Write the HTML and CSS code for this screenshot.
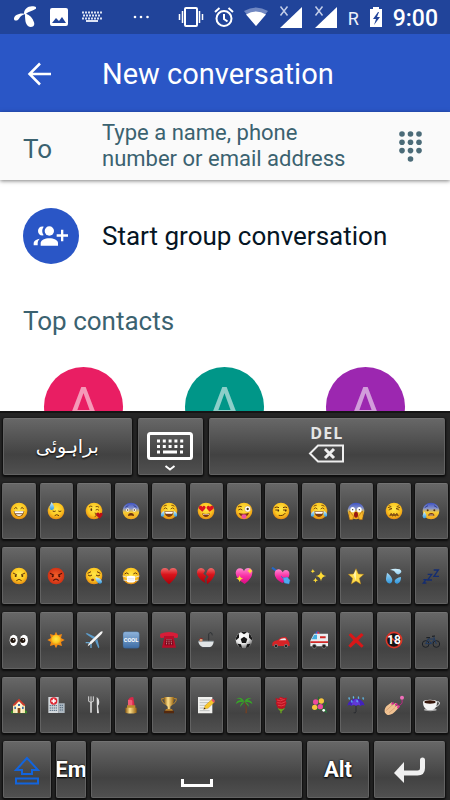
FILE: index.html
```html
<!DOCTYPE html>
<html lang="en">
<head>
    <meta charset="UTF-8">
    <meta name="viewport" content="width=device-width, initial-scale=1.0">
    <title>New conversation</title>
    <link rel="stylesheet" href="styles.css">
</head>
<body>
    <!-- shared gradients and shapes -->
    <svg class="defs" width="0" height="0" aria-hidden="true">
        <defs>
            <radialGradient id="yellow" cx=".5" cy=".4" r=".6"><stop offset="0" stop-color="#ffe84a"/><stop offset=".6" stop-color="#fcc822"/><stop offset="1" stop-color="#e58a12"/></radialGradient>
            <radialGradient id="angry" cx=".5" cy=".5" r=".55"><stop offset="0" stop-color="#f4612a"/><stop offset="1" stop-color="#cc2c12"/></radialGradient>
            <linearGradient id="cold" x1="0" y1="0" x2="0" y2="1"><stop offset="0" stop-color="#3b50c4"/><stop offset=".35" stop-color="#8793c8"/><stop offset=".58" stop-color="#f6cb35"/><stop offset="1" stop-color="#f0a51b"/></linearGradient>
            <linearGradient id="red" x1="0" y1="0" x2="0" y2="1"><stop offset="0" stop-color="#ee6a6a"/><stop offset=".4" stop-color="#d9141b"/><stop offset="1" stop-color="#a80009"/></linearGradient>
            <linearGradient id="pink" x1="0" y1="0" x2="0" y2="1"><stop offset="0" stop-color="#ff8cd0"/><stop offset=".5" stop-color="#f92fa6"/><stop offset="1" stop-color="#d8097f"/></linearGradient>
            <linearGradient id="water" x1="0" y1="0" x2="0" y2="1"><stop offset="0" stop-color="#d2f2ff"/><stop offset="1" stop-color="#2f97dd"/></linearGradient>
            <linearGradient id="gold" x1="0" y1="0" x2="1" y2="0"><stop offset="0" stop-color="#8a5a12"/><stop offset=".4" stop-color="#ffe08a"/><stop offset="1" stop-color="#94600f"/></linearGradient>
            <linearGradient id="cool" x1="0" y1="0" x2="0" y2="1"><stop offset="0" stop-color="#8fb4dc"/><stop offset="1" stop-color="#3d6ca4"/></linearGradient>
            <radialGradient id="ball" cx=".4" cy=".3" r=".7"><stop offset="0" stop-color="#fff"/><stop offset=".6" stop-color="#e8e8e8"/><stop offset="1" stop-color="#777"/></radialGradient>
        </defs>
        <symbol id="face" viewBox="0 0 54 54"><circle cx="27" cy="27" r="25" fill="url(#yellow)"/></symbol>
        <symbol id="joy" viewBox="0 0 54 54">
            <circle cx="27" cy="27" r="25" fill="url(#yellow)"/>
            <path d="M11 21q5-7 11 0M32 21q6-7 11 0M11 13q4-4 9-3M34 10q5-1 9 3" fill="none" stroke="#6b3a08" stroke-width="2.5"/>
            <path d="M13 28h28q-2 17-14 17T13 28z" fill="#7a3b10"/><path d="M15 29h24l-2 6H17z" fill="#fff"/>
            <path d="M13 27C5 29 1 36 3 42q4 5 9 0c2-5 1-10 1-15zM41 27c8 2 12 9 10 15q-4 5-9 0c-2-5-1-10-1-15z" fill="url(#water)"/>
        </symbol>
        <symbol id="signal" viewBox="0 0 25 24">
            <path d="M24 2v21H2z" fill="#fff"/>
            <path d="M2.500 1.500l7 9M9.500 1.500l-7 9" stroke="#c3cee9" stroke-width="1.500" fill="none"/>
        </symbol>
        <symbol id="sparkle" viewBox="0 0 20 20"><path d="M10 0q1 9 10 10-9 1-10 10-1-9-10-10 9-1 10-10z" fill="#ffdc35"/></symbol>
    </svg>

    <div class="app">
        <div class="status-bar">
            <div class="status-left">
                <svg width="23" height="24" viewBox="0 0 69 72"><path d="M33 26C33 14 43 4 57 4c12 0 17 4 9 9-6 5-19 6-27 13 11 4 20 12 24 26 3 10-2 14-10 14-11-1-15-11-16-20-1-7-1-13-1-18-8 1-14 6-18 13C14 47 4 50 3 42 2 33 16 24 33 26z" fill="#fff"/></svg>
                <svg width="18" height="18" viewBox="0 0 18 18"><path fill-rule="evenodd" d="M2 0h14a2 2 0 0 1 2 2v14a2 2 0 0 1-2 2H2a2 2 0 0 1-2-2V2a2 2 0 0 1 2-2zM2 15h14l-4-6-3 4-3-3z" fill="#fff"/></svg>
                <svg width="20" height="12" viewBox="0 0 20 12"><path d="M0 1.500h20M1 4.500h18M0 7.500h20" stroke="#dde4f4" stroke-width="2" stroke-dasharray="2 1"/><path d="M4 10h12" stroke="#dde4f4" stroke-width="2"/></svg>
            </div>
            <svg class="more" width="18" height="4" viewBox="0 0 18 4"><g fill="#fff"><circle cx="3" cy="2" r="1.300"/><circle cx="9" cy="2" r="1.300"/><circle cx="15.500" cy="2" r="1.300"/></g></svg>
            <div class="status-right">
                <svg width="26" height="22" viewBox="0 0 26 22"><rect x="7" y="2" width="12" height="18" rx="1" fill="none" stroke="#fff" stroke-width="2"/><path d="M1.500 8v6M4.500 5v12M21.500 5v12M24.500 8v6" stroke="#fff" stroke-width="1.500"/></svg>
                <svg width="20" height="22" viewBox="0 0 20 22"><circle cx="10" cy="12.500" r="7.500" fill="none" stroke="#fff" stroke-width="2"/><path d="M10 8v5l3.500 2.500M1 6l4.500-4M19 6l-4.500-4" fill="none" stroke="#fff" stroke-width="2"/></svg>
                <svg width="24" height="22" viewBox="0 0 24 22"><path d="M12 20L0 5Q12-2 24 5z" fill="#7188c2"/><path d="M12 20L2 8.500q10-6 20 0z" fill="#fff"/></svg>
                <svg width="25" height="24"><use href="#signal"/></svg>
                <svg width="25" height="24"><use href="#signal"/></svg>
                <span class="roaming">R</span>
                <svg width="14" height="22" viewBox="0 0 14 22"><path d="M4 1h6v2h3v18H1V3h3z" fill="#fff"/><path d="M9 6l-5 7h3l-2 6 6-8H8l2-5z" fill="#21449a"/></svg>
                <span class="clock">9:00</span>
            </div>
        </div>

        <header class="app-bar">
            <button class="back" aria-label="Back">
                <svg width="24" height="24" viewBox="0 0 24 24"><path d="M24 12H3M13 1.500L2.500 12 13 22.500" fill="none" stroke="#fff" stroke-width="2.500"/></svg>
            </button>
            <h1>New conversation</h1>
        </header>

        <div class="recipient">
            <label for="to">To</label>
            <textarea id="to" rows="2" placeholder="Type a name, phone number or email address"></textarea>
            <button class="dialpad" aria-label="Dialpad">
                <svg width="24" height="32" viewBox="0 0 24 32"><g fill="#4b6b78"><circle cx="3" cy="4" r="2.800"/><circle cx="11.500" cy="4" r="2.800"/><circle cx="20" cy="4" r="2.800"/><circle cx="3" cy="12.300" r="2.800"/><circle cx="11.500" cy="12.300" r="2.800"/><circle cx="20" cy="12.300" r="2.800"/><circle cx="3" cy="20.600" r="2.800"/><circle cx="11.500" cy="20.600" r="2.800"/><circle cx="20" cy="20.600" r="2.800"/><circle cx="11.500" cy="29" r="2.800"/></g></svg>
            </button>
        </div>

        <main>
            <button class="start-group">
                <span class="group-icon">
                    <svg width="36" height="22" viewBox="0 0 108 66"><g fill="#fff"><circle cx="49" cy="18" r="14"/><path d="M23 62V54c0-8 13-14 26-14s26 6 26 14v8z"/><path d="M32 5q-9 13 0 26C22 33 15 27 15 18S22 3 32 5zM2 61v-7c0-6 6-11 18-13q-6 6-6 13v7z"/><path d="M84 14h7v14h14v7H91v14h-7V35H71v-7h13z"/></g></svg>
                </span>
                Start group conversation
            </button>
            <h2>Top contacts</h2>
            <div class="contacts">
                <a href="#" class="avatar pink">A</a>
                <a href="#" class="avatar teal">A</a>
                <a href="#" class="avatar purple">A</a>
            </div>
        </main>
    </div>

    <div class="keyboard">
        <div class="row row-top">
            <button class="key language" lang="brh" dir="rtl">براہوئی</button>
            <button class="key" aria-label="Keyboard">
                <svg class="keyboard-icon" width="46" height="40" viewBox="0 0 46 40"><rect x="1.500" y="1.500" width="43" height="25" rx="2" fill="none" stroke="#fff" stroke-width="3"/><path d="M10 9h28M10 14.500h28" stroke="#fff" stroke-width="3" stroke-dasharray="3 2.800"/><path d="M10 20h3M16 20h14M33 20h3" stroke="#fff" stroke-width="3"/><path d="M18.500 34l4.500 3.500 4.500-3.500" fill="none" stroke="#fff" stroke-width="2"/></svg>
            </button>
            <button class="key delete">DEL
                <svg width="37" height="20" viewBox="0 0 37 20"><path d="M10 1.500h25v16H10L2 9.500z" fill="none" stroke="#eee" stroke-width="2"/><path d="M17 5l9 9M26 5l-9 9" stroke="#eee" stroke-width="3"/></svg>
            </button>
        </div>

        <div class="row row-emoji">
            <button class="key" aria-label="Grinning"><svg viewBox="0 0 54 54"><use href="#face"/><path d="M13 20q4-7 9 0M32 20q4-7 9 0" fill="none" stroke="#67380b" stroke-width="3"/><path d="M11 27h32q-2 17-16 17T11 27z" fill="#87521a"/><path d="M13 28h28l-2 6H15zM17 37h20q-4 5-10 5t-10-5z" fill="#fff"/></svg></button>
            <button class="key" aria-label="Cold sweat"><svg viewBox="0 0 54 54"><use href="#face"/><path d="M17 27q5 3 9 0M34 27q5 3 9 0" fill="none" stroke="#67380b" stroke-width="3"/><path d="M23 41q6-6 13 0" fill="none" stroke="#67380b" stroke-width="3"/><path d="M14 0q9 12 7 19-2 6-8 5-7-2-5-10Q10 6 14 0z" fill="url(#water)"/></svg></button>
            <button class="key" aria-label="Blowing a kiss"><svg viewBox="0 0 54 54"><use href="#face"/><ellipse cx="19" cy="23" rx="2.500" ry="4" fill="#5d300a"/><path d="M12 15q5-5 10-1M32 14q6-2 10 2M32 24q5-4 10 1M29 33q8 1 3 5 6 3-3 6" fill="none" stroke="#67380b" stroke-width="2.500"/><path d="M44 50l-9-9q-4-7 2-9 5-1 6 3 5-5 9-1 4 5-8 16z" fill="#bc1118"/></svg></button>
            <button class="key" aria-label="Fearful"><svg viewBox="0 0 54 54"><circle cx="27" cy="27" r="25" fill="url(#cold)"/><path d="M10 16l9-5M35 11l9 5" stroke="#263689" stroke-width="2.500"/><circle cx="17" cy="24" r="5" fill="#fff"/><circle cx="37" cy="24" r="5" fill="#fff"/><circle cx="17" cy="24" r="2.500" fill="#51300c"/><circle cx="37" cy="24" r="2.500" fill="#51300c"/><path d="M18 42q0-9 9-9t9 9q-9-3-18 0z" fill="#70330f"/></svg></button>
            <button class="key" aria-label="Tears of joy"><svg><use href="#joy"/></svg></button>
            <button class="key" aria-label="Heart eyes"><svg viewBox="0 0 54 54"><use href="#face"/><path d="M16 29L6 20q-3-8 4-9 5 0 6 4 3-5 7-3 6 4 0 10zM38 29l-7-7q-5-6 1-10 4-2 7 3 1-4 6-4 7 1 4 9z" fill="#dc1420"/><path d="M15 34q12 4 24 0-3 11-12 11T15 34z" fill="#7c3512"/><path d="M17 35q10 3 20 0l-2 3H19z" fill="#fff"/></svg></button>
            <button class="key" aria-label="Winking with tongue"><svg viewBox="0 0 54 54"><use href="#face"/><path d="M10 24q6-6 12 0M9 15q5-4 11-1" fill="none" stroke="#67380b" stroke-width="3"/><circle cx="38" cy="21" r="9" fill="#fff" stroke="#b77510"/><circle cx="38" cy="21" r="3.500" fill="#3d2b18"/><path d="M11 33q16 5 31-1-3 12-15 12T11 33z" fill="#79310f"/><path d="M20 38q7-3 14 0v8q-7 10-14 0z" fill="#ef509e"/></svg></button>
            <button class="key" aria-label="Smirking"><svg viewBox="0 0 54 54"><use href="#face"/><path d="M8 17q7-4 13 0M33 17q7-4 12 0M10 24h11M33 24h11M20 40q14 3 20-7" fill="none" stroke="#67380b" stroke-width="3"/><circle cx="19" cy="26" r="2.500" fill="#51300c"/><circle cx="41" cy="26" r="2.500" fill="#51300c"/></svg></button>
            <button class="key" aria-label="Laughing"><svg><use href="#joy"/></svg></button>
            <button class="key" aria-label="Screaming"><svg viewBox="0 0 54 54"><circle cx="27" cy="27" r="25" fill="url(#cold)"/><ellipse cx="17" cy="23" rx="7" ry="8" fill="#fff"/><ellipse cx="37" cy="23" rx="7" ry="8" fill="#fff"/><circle cx="17" cy="23" r="2" fill="#333"/><circle cx="37" cy="23" r="2" fill="#333"/><ellipse cx="27" cy="38" rx="6" ry="9" fill="#991810"/><path d="M6 29q4-3 6 4l8 10-3 10H8Q4 44 6 29zM48 29q-4-3-6 4l-8 10 3 10h9q4-9 2-24z" fill="#f9b928" stroke="#9b550d" stroke-width="1.500"/></svg></button>
            <button class="key" aria-label="Confounded"><svg viewBox="0 0 54 54"><use href="#face"/><path d="M9 16l12 4-10 4M45 16l-12 4 10 4M11 11l8 3M43 11l-8 3" fill="none" stroke="#67380b" stroke-width="2.500"/><path d="M14 41l4-7 5 4 4-4 4 4 5-4 4 7-5-2-4 4-4-4-4 4-4-4z" fill="#8b5520" stroke="#67380b" stroke-width="2"/></svg></button>
            <button class="key" aria-label="Anxious"><svg viewBox="0 0 54 54"><circle cx="27" cy="27" r="25" fill="url(#cold)"/><path d="M8 17l10-6M36 11l10 6" stroke="#263689" stroke-width="2.500"/><circle cx="17" cy="25" r="3" fill="#51300c"/><circle cx="37" cy="25" r="3" fill="#51300c"/><path d="M19 41q0-8 9-8t9 8z" fill="#70330f"/><path d="M22 39h12" stroke="#fff" stroke-width="2"/><path d="M7 29q8 10 6 16-3 6-9 3-5-4-1-11z" fill="url(#water)"/></svg></button>

            <button class="key" aria-label="Angry"><svg viewBox="0 0 54 54"><use href="#face"/><path d="M9 18l12 6M45 18l-12 6M19 41q8-8 16 0" fill="none" stroke="#67380b" stroke-width="3"/><circle cx="17" cy="27" r="3" fill="#51300c"/><circle cx="37" cy="27" r="3" fill="#51300c"/></svg></button>
            <button class="key" aria-label="Pouting"><svg viewBox="0 0 54 54"><circle cx="27" cy="27" r="25" fill="url(#angry)"/><path d="M9 19l12 6M45 19l-12 6M19 41q8-9 16 0" fill="none" stroke="#4d1006" stroke-width="3.500"/><circle cx="17" cy="28" r="3" fill="#3d1006"/><circle cx="37" cy="28" r="3" fill="#3d1006"/></svg></button>
            <button class="key" aria-label="Sleepy"><svg viewBox="0 0 54 54"><use href="#face"/><path d="M8 19l10-5M36 14l10 5M9 24q6 6 12 0M33 24q6 6 12 0" fill="none" stroke="#67380b" stroke-width="3"/><ellipse cx="23" cy="39" rx="5" ry="3.500" fill="#884114"/><path d="M31 31q16 2 20 12 1 8-7 7-12-4-13-19z" fill="url(#water)"/></svg></button>
            <button class="key" aria-label="Medical mask"><svg viewBox="0 0 54 54"><use href="#face"/><path d="M8 21q6-7 12 0M34 21q6-7 12 0" fill="none" stroke="#67380b" stroke-width="3"/><path d="M2 27l14 4h22l14-4M4 39l12 2M50 39l-12 2" fill="none" stroke="#e8e8e8" stroke-width="2.500"/><path d="M15 28q12-4 24 0v16q-12 5-24 0z" fill="#fff"/><path d="M17 34h20M17 39h20" stroke="#c9c9c9" stroke-width="1.500"/></svg></button>
            <button class="key" aria-label="Heart"><svg viewBox="0 0 54 54"><path d="M27 52Q3 32 2 16 3 3 15 3q9 0 12 9Q30 3 39 3q12 0 13 13-1 16-25 36z" fill="url(#red)"/></svg></button>
            <button class="key" aria-label="Broken heart"><svg viewBox="0 0 54 54"><path d="M25 48Q1 34 0 17 0 4 12 3q9 0 12 8l-5 9 9 8-6 9z" fill="url(#red)"/><path d="M30 52l-1-14 6-9-8-8 5-12q6-8 14-5 11 5 7 19-5 14-23 29z" fill="url(#red)"/></svg></button>
            <button class="key" aria-label="Sparkling heart"><svg viewBox="0 0 54 54"><path d="M29 51Q3 35 2 18 3 4 15 4q9 0 12 9Q30 3 40 3q12 1 12 14-1 17-23 34z" fill="url(#pink)"/><use href="#sparkle" x="35" y="2" width="20" height="20"/><use href="#sparkle" x="3" y="24" width="22" height="22"/></svg></button>
            <button class="key" aria-label="Heart with arrow"><svg viewBox="0 0 54 54"><path d="M0 2l12 9" stroke="#2468c8" stroke-width="6"/><path d="M31 48Q8 36 8 21 8 8 19 7q9 0 13 9 5-10 14-6 9 5 5 18-4 11-20 20z" fill="url(#pink)"/><path d="M27 28l20 17" stroke="#2878d0" stroke-width="3"/><path d="M33 33l13-3 8 10-3 11-14-3z" fill="#4eaaf2" stroke="#2b7ac7"/></svg></button>
            <button class="key" aria-label="Sparkles"><svg viewBox="0 0 54 54"><use href="#sparkle" x="17" y="9" width="32" height="36"/><use href="#sparkle" x="2" y="5" width="13" height="15"/><use href="#sparkle" x="9" y="32" width="15" height="16"/></svg></button>
            <button class="key" aria-label="Star"><svg viewBox="0 0 54 54"><path d="M27 5l7 16 16 1-13 12 4 17-14-9-14 9 4-17L4 22l16-1z" fill="#ffdc4b" stroke="#b9831b" stroke-width="1.500"/><path d="M27 8v33l-8-18z" fill="#fff4a6"/></svg></button>
            <button class="key" aria-label="Sweat drops"><svg viewBox="0 0 54 54"><g fill="url(#water)"><path d="M15 9Q28 2 44 7q9 6 2 12-7 7-14-1Q28 9 15 9zM6 17q13 9 16 21-1 13-11 11-9-4-8-15zM48 30q1 16-11 20-9-1-8-9 3-8 19-11z"/></g></svg></button>
            <button class="key" aria-label="Sleeping"><svg viewBox="0 0 54 54"><path d="M35 9h14L36 28h15M17 22h12L17 39h13M4 38h8L4 48h9" fill="none" stroke="#142d72" stroke-width="4"/></svg></button>

            <button class="key" aria-label="Eyes"><svg viewBox="0 0 54 54"><g fill="#fff"><ellipse cx="11" cy="28" rx="12" ry="17"/><ellipse cx="42" cy="28" rx="12" ry="17"/></g><circle cx="9" cy="28" r="8" fill="#21160e"/><circle cx="38" cy="28" r="8" fill="#21160e"/><circle cx="11" cy="26" r="2" fill="#fff"/><circle cx="40" cy="26" r="2" fill="#fff"/></svg></button>
            <button class="key" aria-label="Sun"><svg viewBox="0 0 54 54"><path d="M27 2l5 11 13-4-3 12 11 6-11 6 3 12-13-4-5 11-5-11-13 4 3-12L1 27l11-6L9 9l13 4z" fill="#f58a12"/><circle cx="27" cy="27" r="15" fill="url(#yellow)"/></svg></button>
            <button class="key" aria-label="Airplane"><svg viewBox="0 0 54 54"><path d="M2 8l4-2 25 12-6 6zM37 24l6 25-3 3-10-23z" fill="#5c9bc9"/><path d="M52 1q3 3-4 10L20 38 8 46l4-11L40 8Q50-1 52 1z" fill="#f4f4f4"/><path d="M2 35h13M18 39v12" stroke="#69a6cf" stroke-width="4"/></svg></button>
            <button class="key" aria-label="Cool"><svg viewBox="0 0 54 54"><rect x="3" y="2" width="49" height="50" rx="7" fill="url(#cool)" stroke="#315a8a"/><text x="27" y="34" text-anchor="middle" class="cool-text">COOL</text></svg></button>
            <button class="key" aria-label="Telephone"><svg viewBox="0 0 54 54"><path d="M14 14h26l8 36H6z" fill="#b80d29"/><path d="M1 8Q27-2 53 8q3 9-1 13l-10-1v-5H12v5l-10 1Q-2 17 1 8z" fill="#d81c38"/><path d="M17 24h20l3 19H14z" fill="#7d071b"/><path d="M21 25l-2 17M27 25v17M33 25l2 17" stroke="#e1a7ad" stroke-width="3" stroke-dasharray="3 3"/></svg></button>
            <button class="key" aria-label="Bathtub"><svg viewBox="0 0 54 54"><path d="M35 33V9q3-7 9-3l2 7" fill="none" stroke="#292c30" stroke-width="2.500"/><path d="M4 32h46q-2 13-11 16H17Q6 44 4 32z" fill="#e0e4e6"/><path d="M4 31h46" stroke="#a4afb5" stroke-width="3"/><circle cx="12" cy="27" r="5" fill="#dc9e7b"/><path d="M7 26q3-7 10-3" stroke="#8a2020" stroke-width="3" fill="none"/><path d="M15 50h24" stroke="#4a4e53" stroke-width="3"/></svg></button>
            <button class="key" aria-label="Soccer ball"><svg viewBox="0 0 54 54"><circle cx="27" cy="27" r="25" fill="url(#ball)"/><path d="M27 17l10 7-4 12H21l-4-12zM18 4q9-4 18 0l-9 6zM3 20q3-9 9-12v12l-9 8zM51 20q-3-9-9-12v12l9 8zM7 38l11 2 3 11q-10-3-14-13zM47 38l-11 2-3 11q10-3 14-13z" fill="#171717"/></svg></button>
            <button class="key" aria-label="Car"><svg viewBox="0 0 54 54"><path d="M1 45V36q4-7 17-9 8-11 24-9l7 11q5 5 4 16z" fill="#d62326"/><path d="M21 28q8-8 19-6l3 6z" fill="#e7edf1"/><g fill="#222" stroke="#888" stroke-width="2"><circle cx="12" cy="45" r="5"/><circle cx="42" cy="45" r="5"/></g></svg></button>
            <button class="key" aria-label="Ambulance"><svg viewBox="0 0 54 54"><path d="M17 3l6-3 5 4v6H17z" fill="#2e61d9"/><path d="M22 1l6 3v6h-6z" fill="#e22f3c"/><path d="M1 46V29L12 8h42v38z" fill="#e9edf0"/><path d="M5 25l8-14h8v14z" fill="#44aee0"/><path d="M1 31h53v5H1zM30 16h17v6H30z" fill="#d32a28"/><g fill="#222" stroke="#888" stroke-width="2"><circle cx="13" cy="46" r="6"/><circle cx="42" cy="46" r="6"/></g></svg></button>
            <button class="key" aria-label="Cross mark"><svg viewBox="0 0 54 54"><path d="M11 6l16 15L43 6l7 6-16 16 16 16-6 6-17-15-16 15-7-6 15-17L5 12z" fill="#d81718"/></svg></button>
            <button class="key" aria-label="Adults only"><svg viewBox="0 0 54 54"><circle cx="27" cy="27" r="24" fill="#151515"/><path d="M10 13l34 29" stroke="#d93629" stroke-width="5"/><text x="27" y="40" text-anchor="middle" class="adult-text">18</text><circle cx="27" cy="27" r="23" fill="none" stroke="#d93629" stroke-width="5"/></svg></button>
            <button class="key" aria-label="Bicycle"><svg viewBox="0 0 54 54"><g fill="none" stroke="#1c2026" stroke-width="3"><circle cx="11" cy="39" r="10"/><circle cx="43" cy="39" r="10"/></g><path d="M11 39l7-15 10 14H11M18 24h19l-9 14M43 39L35 17" fill="none" stroke="#203a60" stroke-width="3"/><path d="M13 20h11M30 16l9-1" stroke="#15191f" stroke-width="3"/></svg></button>

            <button class="key" aria-label="House"><svg viewBox="0 0 54 54"><path d="M3 46q9-8 24-6 15-2 24 6v6H3z" fill="#3b8a27"/><path d="M9 27h36v24H9z" fill="#f6e8ac"/><path d="M27 8l19 19-3 3-16-9-16 9-3-3z" fill="#d13c2d"/><path d="M27 16l10 10v25H17V26z" fill="#fff4d0"/><path d="M23 36h8v15h-8z" fill="#874819"/><path d="M13 32h5v7h-5zM36 32h5v7h-5zM24 24h6v6h-6z" fill="#3b70ae"/></svg></button>
            <button class="key" aria-label="Hospital"><svg viewBox="0 0 54 54"><path d="M4 3h31v48H4z" fill="#d3d8dc"/><path d="M35 22h18v29H35z" fill="#aeb9c2"/><path d="M8 29h24M8 36h24M8 43h24M38 28h12M38 35h12M38 42h12" stroke="#50677b" stroke-width="3" stroke-dasharray="4 2"/><circle cx="20" cy="15" r="11" fill="#dd2530"/><path d="M20 8v14M13 15h14" stroke="#fff" stroke-width="5"/></svg></button>
            <button class="key" aria-label="Fork and knife"><svg viewBox="0 0 54 54"><path d="M11 1v15q6 6 14 0V1M18 1v18" fill="none" stroke="#d6d6d6" stroke-width="3"/><path d="M18 18v32" stroke="#d6d6d6" stroke-width="5"/><path d="M35 3q10 6 7 22l-3 4 3 21q-3 4-6 0z" fill="#dedede"/></svg></button>
            <button class="key" aria-label="Lipstick"><svg viewBox="0 0 54 54"><path d="M18 12Q24 1 34 4l4 26H18z" fill="#d9284a"/><path d="M18 12q10-3 13 2v16H18z" fill="#f15b76"/><path d="M15 28h25v9H15z" fill="#ba8b2d"/><path d="M10 35h34v15q-17 5-34 0z" fill="url(#gold)"/></svg></button>
            <button class="key" aria-label="Trophy"><svg viewBox="0 0 54 54"><path d="M14 8H5q0 14 14 17M40 8h9q0 14-14 17" fill="none" stroke="#c28b2a" stroke-width="3"/><path d="M12 3h30q0 24-11 29v8h-8v-8Q12 27 12 3z" fill="url(#gold)"/><path d="M18 39h18l3 6H15z" fill="#b7802b"/><path d="M12 44h30v8H12z" fill="#54290e"/></svg></button>
            <button class="key" aria-label="Memo"><svg viewBox="0 0 54 54"><path d="M3 3h43v49H3z" fill="#f1f1ee"/><path d="M8 12h32M8 20h31M8 28h22M8 36h15M8 44h30" stroke="#a4a7a8" stroke-width="2"/><path d="M20 40l5-12 20-18 8 8-20 19z" fill="#f7c72d" stroke="#a76c10"/><path d="M43 12l5-4 6 7-4 5z" fill="#e25363"/><path d="M20 40l2-5 4 3z" fill="#222"/></svg></button>
            <button class="key" aria-label="Palm tree"><svg viewBox="0 0 54 54"><path d="M27 18q7 15 4 34h5q2-19-6-35z" fill="#6d4027"/><path d="M28 17Q20 0 3 7q12 0 17 6Q5 11 3 24q8-8 25-7zM28 17q7-15 22-10-9 1-13 6 13-1 15 11-10-8-24-7zM28 17q-12 3-13 16 6-7 13-16zM28 17q13 4 14 15-6-6-14-15z" fill="#37a627"/></svg></button>
            <button class="key" aria-label="Rose"><svg viewBox="0 0 54 54"><path d="M27 30v22M27 45l-8-8M28 44l9-7" stroke="#6aa520" stroke-width="4"/><path d="M10 6l9 2 7-6 10 4 9-1-4 11 3 4-6 15q-11 7-21 0l-6-15 3-3z" fill="#bf1221"/><path d="M15 12q9 6 23-2M16 20q14 5 25-3M18 28q11 4 21-2M24 5q-3 4 8 4" fill="none" stroke="#f1565b" stroke-width="2"/></svg></button>
            <button class="key" aria-label="Bouquet"><svg viewBox="0 0 54 54"><path d="M14 14l25 23 10-18M26 2l2 32 18 12M14 38l31 5" stroke="#246b2b" stroke-width="4" fill="none"/><g fill="#f7c53d"><circle cx="34" cy="15" r="8"/><circle cx="14" cy="34" r="8"/></g><g fill="#ed4a9e"><circle cx="17" cy="18" r="8"/><circle cx="31" cy="32" r="8"/></g><path d="M36 43l10-7 6 16-7-4z" fill="#28743a"/><circle cx="41" cy="43" r="4" fill="#fff"/></svg></button>
            <button class="key" aria-label="Umbrella"><svg viewBox="0 0 54 54"><path d="M27 12v35q-1 6-7 3" fill="none" stroke="#292b30" stroke-width="3"/><path d="M1 29Q5 9 27 8q22 1 26 21-7-4-12 1-7-6-14 0-7-6-14 0-5-5-12-1z" fill="#4322bd"/><path d="M14 29q2-16 13-21 11 5 13 21-6-6-13 0-7-6-13 0z" fill="#6039d5"/><path d="M6 3q4 7 1 8-4-1-1-8zM19 0q4 7 1 8-4-1-1-8zM34 1q4 7 1 8-4-1-1-8zM48 3q4 7 1 8-4-1-1-8zM14 12q4 7 1 8-4-1-1-8zM30 11q4 7 1 8-4-1-1-8z" fill="#62c6fb" stroke="#62c6fb"/></svg></button>
            <button class="key" aria-label="Nail polish"><svg viewBox="0 0 54 54"><path d="M0 50q-4-8 4-19l16-12 5 4-7 8 13-10 6 4-8 8 11-6 4 5-10 11q-14 17-28 13z" fill="#f1c292"/><path d="M3 44l17-15M12 50l18-15" stroke="#bf8961" stroke-width="1.500"/><path d="M18 23l7-5 2 4-6 5zM29 25l7-4 2 4-6 5zM36 32l7-3 1 4-6 5z" fill="#e12597"/><path d="M37 29q18-2 14-17" fill="none" stroke="#c12886" stroke-width="3"/><circle cx="51" cy="5" r="6" fill="#ef6fba"/></svg></button>
            <button class="key" aria-label="Coffee"><svg viewBox="0 0 54 54"><ellipse cx="25" cy="41" rx="19" ry="5" fill="#aaa"/><path d="M42 18q13-3 10 6-3 7-13 9" fill="none" stroke="#ddd" stroke-width="3"/><path d="M3 18h42q0 20-14 24H17Q3 37 3 18z" fill="#f4f4f4"/><ellipse cx="24" cy="18" rx="21" ry="7" fill="#eee"/><ellipse cx="24" cy="18" rx="17" ry="5" fill="#351509"/></svg></button>
        </div>

        <div class="row row-bottom">
            <button class="key" aria-label="Shift"><svg class="shift-icon" width="28" height="30" viewBox="0 0 28 30"><path d="M14 2L3 14h6v4h10v-4h6zM3 22.500h22v5H3z" fill="none" stroke="#1264dd" stroke-width="2"/></svg></button>
            <button class="key text-key">Em</button>
            <button class="key space" aria-label="Space"><svg width="34" height="10" viewBox="0 0 34 10"><path d="M2.500 1v6.500h29V1" fill="none" stroke="#fff" stroke-width="3"/></svg></button>
            <button class="key text-key">Alt</button>
            <button class="key" aria-label="Enter"><svg width="34" height="28" viewBox="0 0 34 28"><path d="M29.500 4v8q0 5-5 5H10" fill="none" stroke="#f0f0f0" stroke-width="5" stroke-linecap="round"/><path d="M1 17L11 6v21z" fill="#f0f0f0"/></svg></button>
        </div>
    </div>
</body>
</html>
```

FILE: styles.css
```css
* {
    box-sizing: border-box;
}
body {
    margin: 0;
    height: 100vh;
    display: grid;
    grid-template-rows: minmax(0, 411fr) minmax(0, 389fr);
    overflow: hidden;
    background: #fff;
    color: #3b6270;
    font-family: Roboto, "Noto Sans", sans-serif;
}
button {
    margin: 0;
    padding: 0;
    border: 0;
    background: none;
    color: inherit;
    font: inherit;
}
svg {
    display: block;
    flex: none;
}
.defs {
    position: absolute;
}

/* messaging app */
.app {
    min-height: 0;
    overflow: hidden;
}
.status-bar {
    display: flex;
    align-items: center;
    height: 34px;
    padding: 0 12px 0 13px;
    background: #21449a;
    color: #fff;
}
.status-left, .status-right {
    display: flex;
    align-items: center;
}
.status-left {
    gap: 14px;
}
.status-right {
    gap: 10px;
    margin-left: auto;
}
.more {
    margin-left: 30px;
}
.roaming {
    padding-top: 2px;
    font-size: 18px;
    color: #eef2fa;
}
.clock {
    padding-top: 2px;
    font-size: 23px;
    font-weight: 500;
}
.app-bar {
    display: flex;
    align-items: center;
    height: 78px;
    padding: 2px 27px 0;
    background: #2a56c6;
    color: #fff;
}
.back {
    width: 75px;
}
h1 {
    margin: 0;
    font-size: 29px;
    font-weight: 400;
}
.recipient {
    display: flex;
    align-items: center;
    height: 68px;
    padding: 0 27px 0 23px;
    background: #fafafa;
    box-shadow: 0 1px 4px rgba(0, 0, 0, .5);
}
.recipient label {
    width: 79px;
    padding-top: 6px;
    font-size: 26px;
}
.recipient textarea {
    flex: 1;
    min-width: 0;
    height: 52px;
    margin-right: 30px;
    padding: 0;
    border: 0;
    outline: 0;
    resize: none;
    overflow: hidden;
    background: none;
    font: 22px/26px Roboto, sans-serif;
}
.recipient textarea::placeholder {
    color: #3b6270;
}
.start-group {
    display: flex;
    align-items: center;
    gap: 23px;
    width: 100%;
    padding: 28px 23px 0;
    color: #051524;
    font-size: 26px;
}
.group-icon {
    display: flex;
    align-items: center;
    justify-content: center;
    width: 56px;
    height: 56px;
    border-radius: 50%;
    background: #2a56c6;
}
h2 {
    margin: 41px 23px 29px;
    font-size: 26px;
    line-height: 33px;
    font-weight: 400;
}
.contacts {
    display: grid;
    grid-template-columns: repeat(3, 1fr);
    justify-items: center;
    padding: 0 14px 0 13px;
}
.avatar {
    width: 79px;
    height: 79px;
    border-radius: 50%;
    color: rgba(255, 255, 255, .55);
    font-size: 52px;
    line-height: 79px;
    text-align: center;
    text-decoration: none;
}
.pink { background: #e91e63; }
.teal { background: #009688; }
.purple { background: #9c27b0; }

/* keyboard */
.keyboard {
    min-height: 0;
    display: grid;
    grid-template-rows: repeat(6, 1fr);
    row-gap: 8px;
    padding: 7px 0 2px;
    background: #252525;
    box-shadow: inset 0 2px #151515;
}
.row {
    display: grid;
    min-height: 0;
}
.row-top {
    grid-template-columns: 129fr 65fr 237fr;
    gap: 6px;
    padding: 0 5px 0 3px;
}
.row-emoji {
    grid-row: span 4;
    grid-template-columns: repeat(12, 1fr);
    grid-template-rows: repeat(4, 1fr);
    gap: 8px 4px;
    padding: 0 2px;
}
.row-bottom {
    grid-template-columns: 48fr 30fr 211fr 62fr 71fr;
    gap: 5px;
    padding: 0 5px 0 3px;
}
.key {
    display: flex;
    align-items: center;
    justify-content: center;
    min-width: 0;
    overflow: hidden;
    border: 1px solid #626262;
    border-top-color: #737373;
    border-radius: 2px;
    background: linear-gradient(#676767, #424242 65%, #505050);
    box-shadow: 0 1px 2px 1px #0c0c0c;
    color: #fff;
}
.row-emoji svg {
    width: 18px;
    height: 18px;
    overflow: visible;
}
.language {
    font-family: "DejaVu Sans", sans-serif;
    font-size: 19px;
    text-shadow: 0 1px 2px #000;
}
.keyboard-icon {
    margin-top: 12px;
}
.delete {
    flex-direction: column;
    gap: 2px;
    padding-bottom: 4px;
    color: #e5e5e5;
    font-family: "Open Sans", sans-serif;
    font-size: 16px;
    font-weight: 700;
    line-height: 18px;
    letter-spacing: 1px;
}
.text-key {
    font-size: 22px;
    font-weight: 700;
    text-shadow: 0 1px 2px #000, 0 0 2px #000;
}
.shift-icon {
    margin-top: 3px;
}
.space {
    align-items: flex-end;
    padding-bottom: 9px;
}
.cool-text {
    fill: #fff;
    font: 700 17px Roboto, sans-serif;
}
.adult-text {
    fill: #fff;
    font: 700 37px Roboto, sans-serif;
}
```
